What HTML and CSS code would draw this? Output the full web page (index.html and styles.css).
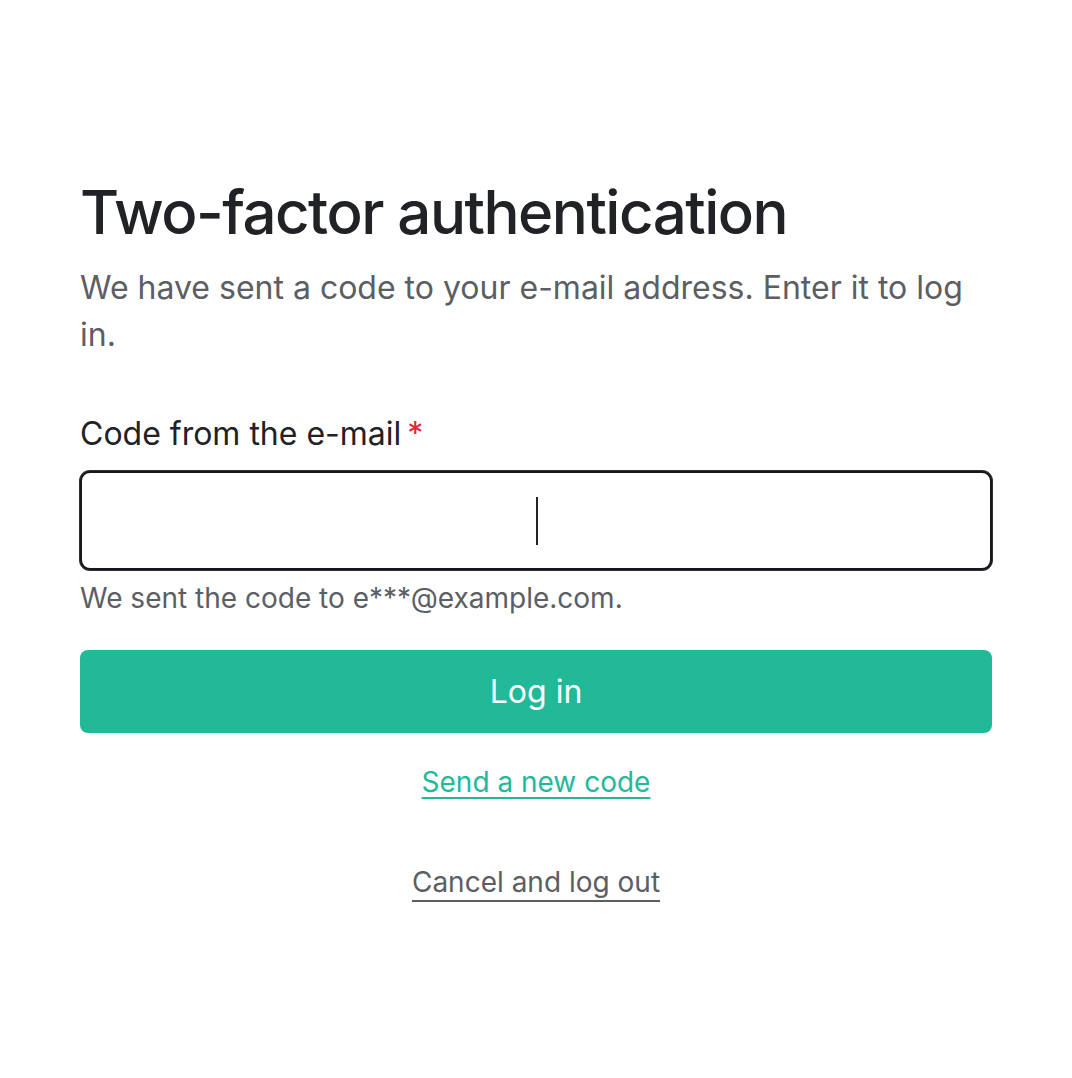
FILE: index.html
```html
<!DOCTYPE html>
<html lang="en">
<head>
<meta charset="utf-8">
<title>Two-factor authentication</title>
<link rel="stylesheet" href="styles.css">
</head>
<body>
<main class="page">
  <h1 class="title">Two-factor authentication</h1>
  <p class="lead">We have sent a code to your e-mail address. Enter it to log in.</p>
  <form class="form">
    <label class="label" for="code">Code from the e-mail<span class="req">*</span></label>
    <div class="field">
      <input class="input" id="code" type="text" inputmode="numeric" autocomplete="one-time-code">
      <span class="caret"></span>
    </div>
    <p class="hint">We sent the code to e***@example.com.</p>
    <button class="btn" type="button">Log in</button>
    <a class="link-green" href="#">Send a new code</a>
    <a class="link-gray" href="#">Cancel and log out</a>
  </form>
</main>
</body>
</html>
```

FILE: styles.css
```css
* { box-sizing: border-box; }
html, body { margin: 0; padding: 0; background: #ffffff; }
body {
  font-family: Inter, "Noto Sans", "Liberation Sans", sans-serif;
  color: #202226;
}
.page {
  padding: 168px 80px 0 80px;
}
.title {
  margin: 0;
  font-size: 60px;
  line-height: 88px;
  font-weight: 500;
  letter-spacing: -0.025em;
  color: #202226;
}
.lead {
  margin: 8px 0 0;
  font-size: 32px;
  line-height: 47px;
  color: #5b5e63;
  max-width: 900px;
}
.form {
  display: flex;
  flex-direction: column;
  margin-top: 56px;
}
.label {
  font-size: 32px;
  line-height: 40px;
  color: #202226;
}
.req {
  color: #e3263a;
  margin-left: 6px;
}
.field {
  position: relative;
  margin-top: 17px;
}
.input {
  display: block;
  width: 100%;
  height: 99px;
  border: 2px solid #16171a;
  box-shadow: 0 0 0 1px #2e2f33;
  border-radius: 10px;
  font: inherit;
  font-size: 32px;
  text-align: center;
  outline: none;
  background: #fff;
}
.caret {
  position: absolute;
  left: 456px;
  top: 26px;
  width: 2px;
  height: 48px;
  background: #222326;
}
.hint {
  margin: 8px 0 0;
  font-size: 28px;
  line-height: 40px;
  color: #5b5e63;
}
.btn {
  margin-top: 32px;
  height: 83px;
  border: 0;
  border-radius: 8px;
  background: #22b999;
  color: #ffffff;
  font: inherit;
  font-size: 32px;
  cursor: pointer;
}
.link-green {
  align-self: center;
  margin-top: 29px;
  font-size: 28px;
  line-height: 40px;
  color: #22b999;
  text-decoration: underline;
  text-underline-offset: 5px;
  text-decoration-thickness: 2px;
}
.link-gray {
  align-self: center;
  margin-top: 62px;
  font-size: 28px;
  line-height: 36px;
  color: #5b5e63;
  text-decoration: none;
  border-bottom: 2px solid #5b5e63;
}
```
